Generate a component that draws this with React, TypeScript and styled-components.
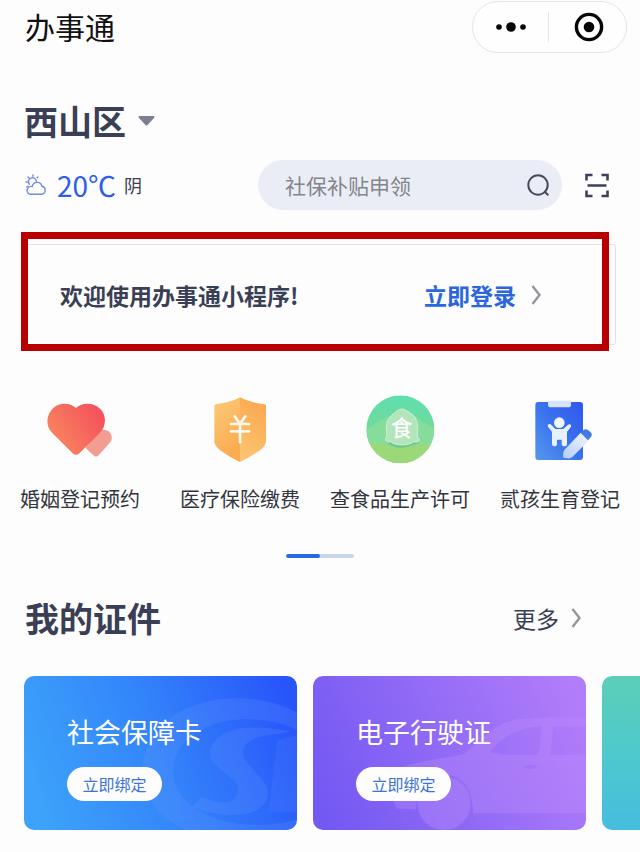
import React from "react";
import styled, { createGlobalStyle } from "styled-components";

const Global = createGlobalStyle`
  *, *::before, *::after { box-sizing: border-box; }
  body {
    margin: 0;
    background: #fdfdfd;
    color: #3a3f56;
    font-family: "Noto Sans CJK SC", sans-serif;
    overflow-x: hidden;
  }
  button, input { font: inherit; color: inherit; }
  button { border: 0; padding: 0; background: none; cursor: pointer; }
  h1, h2, h3, p, ul { margin: 0; padding: 0; }
  svg { display: block; flex: none; }
`;

const Page = styled.div`
  overflow: hidden;
  padding-bottom: 22px;
`;

const TitleBar = styled.header`
  display: flex;
  align-items: flex-start;
  justify-content: space-between;
  padding: 1px 13px 0 25px;
`;

const AppTitle = styled.h1`
  font-size: 30px;
  line-height: 50px;
  font-weight: 400;
  color: #111;
`;

const Capsule = styled.div`
  display: flex;
  align-items: center;
  width: 155px;
  height: 52px;
  border: 1px solid #e6e6ea;
  border-radius: 26px;
  background: #fefefe;
`;

const CapsuleButton = styled.button`
  display: flex;
  flex: 1;
  align-items: center;
  justify-content: center;
  height: 30px;
  & + & {
    padding-left: 2px;
    border-left: 1px solid #e6e6ea;
  }
`;

const Region = styled.button`
  display: flex;
  align-items: center;
  gap: 12px;
  margin: 43px 24px 0;
  font-size: 34px;
  line-height: 50px;
  font-weight: 700;
`;

const ToolRow = styled.div`
  display: flex;
  align-items: center;
  padding: 0 30px 0 25px;
  margin-top: 14px;
`;

const Weather = styled.div`
  display: flex;
  flex: 1;
  align-items: center;
  min-width: 0;
`;

const Temperature = styled.span`
  margin-left: 10px;
  font-size: 28px;
  line-height: 40px;
  color: #2b5cf0;
`;

const Sky = styled.span`
  margin-left: 8px;
  font-size: 18px;
  line-height: 40px;
`;

const SearchBox = styled.form`
  display: flex;
  align-items: center;
  flex: 0 1 304px;
  height: 50px;
  padding: 0 12px 0 27px;
  border-radius: 25px;
  background: #eaedf5;
`;

const SearchInput = styled.input`
  flex: 1;
  min-width: 0;
  padding: 0;
  border: 0;
  outline: 0;
  background: none;
  font-size: 21px;
  line-height: 32px;
  &::placeholder { color: #84858b; opacity: 1; }
`;

const ScanButton = styled.button`
  margin-left: 22px;
`;

const Notice = styled.section`
  position: relative;
  display: flex;
  align-items: center;
  justify-content: space-between;
  height: 101px;
  margin: 34px 24px 0;
  padding: 0 73px 0 35px;
  border: 1px solid #e3e3e5;
  border-radius: 3px;
  font-size: 23px;
  line-height: 34px;
  font-weight: 700;
  &::after {
    content: "";
    position: absolute;
    inset: -13px 6px -7px -4px;
    border: 7px solid #b90000;
    pointer-events: none;
  }
`;

const LoginLink = styled.a`
  display: flex;
  align-items: center;
  gap: 15px;
  color: #2a66dd;
  text-decoration: none;
`;

const Services = styled.nav`
  display: grid;
  grid-template-columns: repeat(4, 1fr);
  margin-top: 45px;
`;

const Service = styled.a`
  display: flex;
  flex-direction: column;
  align-items: center;
  gap: 14px;
  color: #33353d;
  font-size: 20px;
  line-height: 30px;
  text-decoration: none;
  white-space: nowrap;
`;

const Pager = styled.div`
  display: flex;
  width: 68px;
  height: 4px;
  margin: 40px auto 0;
  border-radius: 2px;
  background: #c9d6ea;
  overflow: hidden;
`;

const PagerThumb = styled.span`
  width: 50%;
  border-radius: 2px;
  background: #2a68e0;
`;

const SectionHead = styled.div`
  display: flex;
  align-items: center;
  justify-content: space-between;
  margin: 35px 58px 0 25px;
`;

const SectionTitle = styled.h2`
  font-size: 34px;
  line-height: 50px;
  font-weight: 700;
`;

const MoreLink = styled.a`
  display: flex;
  align-items: center;
  gap: 12px;
  color: #3a3f56;
  font-size: 23px;
  line-height: 34px;
  text-decoration: none;
`;

const CardStrip = styled.div`
  display: flex;
  gap: 16px;
  margin-top: 33px;
  padding-left: 24px;
`;

const Card = styled.article<{ $fill: string }>`
  position: relative;
  flex: 0 0 273px;
  height: 154px;
  padding: 36px 43px 0;
  border-radius: 10px;
  background: ${(p) => p.$fill};
  overflow: hidden;
`;

const CardArt = styled.svg`
  position: absolute;
  inset: 0;
  width: 100%;
  height: 100%;
`;

const CardTitle = styled.h3`
  position: relative;
  font-size: 27px;
  line-height: 40px;
  font-weight: 400;
  color: #fff;
`;

const BindButton = styled.button`
  position: relative;
  width: 95px;
  height: 34px;
  margin-top: 15px;
  border-radius: 17px;
  background: #fdfdfe;
  color: #3c74d6;
  font-size: 16px;
  line-height: 34px;
`;

const Chevron = () => (
  <svg width="11" height="22" viewBox="0 0 11 22" fill="none" stroke="#94969d" strokeWidth="2.4" aria-hidden="true">
    <path d="M1.5 2L8.5 11L1.5 20" />
  </svg>
);

const HeartIcon = () => (
  <svg width="80" height="80" viewBox="90 30 240 240" aria-hidden="true">
    <defs>
      <linearGradient id="heart" x1="0" y1="0.7" x2="0.9" y2="0.2">
        <stop offset="0" stopColor="#f98860" />
        <stop offset="1" stopColor="#f4545b" />
      </linearGradient>
    </defs>
    <path d="M250 166C262 148 286 144 298 156C308 167 308 180 298 190L266 226Q258 233 250 226L226 203Z" fill="#f39c90" />
    <path d="M198 84C180 68 150 66 130 84C108 104 106 138 126 158L188 220Q198 229 208 220L270 158C290 138 290 104 270 86C250 67 218 67 198 84Z" fill="url(#heart)" />
  </svg>
);

const ShieldIcon = () => (
  <svg width="80" height="80" viewBox="570 30 240 240" aria-hidden="true">
    <defs>
      <linearGradient id="shieldL" x1="0" y1="0" x2="0.4" y2="1">
        <stop offset="0" stopColor="#fccb78" />
        <stop offset="1" stopColor="#fbab50" />
      </linearGradient>
      <linearGradient id="shieldR" x1="0.5" y1="0" x2="0.2" y2="1">
        <stop offset="0" stopColor="#fba950" />
        <stop offset="1" stopColor="#fcc573" />
      </linearGradient>
    </defs>
    <path d="M690 52C668 64 640 70 617 73Q613 74 613 78V185C615 208 658 228 690 246Z" fill="url(#shieldL)" />
    <path d="M690 52C712 64 740 70 764 73Q768 74 768 78V185C766 208 722 228 690 246Z" fill="url(#shieldR)" />
    <path d="M674 109L690 132L706 109M663 132H717M663 154H717M690 132V187" fill="none" stroke="#fffaf0" strokeWidth="8" strokeLinecap="round" />
  </svg>
);

const FoodIcon = () => (
  <svg width="80" height="80" viewBox="120 30 240 240" aria-hidden="true">
    <defs>
      <linearGradient id="food" x1="0" y1="0" x2="0" y2="1">
        <stop offset="0" stopColor="#5fdfae" />
        <stop offset="1" stopColor="#82d58a" />
      </linearGradient>
      <clipPath id="foodClip"><circle cx="241" cy="148" r="102" /></clipPath>
    </defs>
    <g clipPath="url(#foodClip)">
      <rect x="139" y="46" width="204" height="204" fill="url(#food)" />
      <path d="M139 150C150 140 170 130 195 112L290 112C310 128 330 138 343 146V210H139Z" fill="#86dc9b" />
      <path d="M139 190C175 186 210 202 241 202S310 188 343 190V250H139Z" fill="#9bd878" />
    </g>
    <path d="M198 188L218 176H268L300 188L262 200Q241 207 222 200Z" fill="#66bd86" opacity="0.65" />
    <path d="M232 92Q246 82 260 92C272 100 282 105 286 114C295 130 294 154 292 170L299 180Q292 190 282 185C265 198 228 198 212 185Q200 190 196 178L201 168C197 146 198 124 209 112C215 104 225 98 232 92Z" fill="#b2e6ba" stroke="#cdf1d2" strokeWidth="3" />
    <text x="245" y="167" textAnchor="middle" fontSize="64" fontWeight="500" fill="#fff">食</text>
  </svg>
);

const ClipboardIcon = () => (
  <svg width="80" height="80" viewBox="600 30 240 240" aria-hidden="true">
    <defs>
      <linearGradient id="board" x1="1" y1="0.1" x2="0" y2="1">
        <stop offset="0" stopColor="#3159ed" />
        <stop offset="0.5" stopColor="#3a74ee" />
        <stop offset="1" stopColor="#5598ed" />
      </linearGradient>
      <linearGradient id="pencil" x1="1" y1="0" x2="0" y2="1">
        <stop offset="0" stopColor="#f2f6ff" />
        <stop offset="1" stopColor="#b4cdf7" />
      </linearGradient>
    </defs>
    <rect x="646" y="66" width="143" height="174" rx="9" fill="url(#board)" />
    <path d="M684 62H753V75Q753 82 745 82H692Q684 82 684 75Z" fill="#d5e3fb" />
    <circle cx="718" cy="128" r="16" fill="#f0f5ff" />
    <path d="M684 134Q690 130 694 135L706 147H730L743 135Q748 130 753 135Q755 139 751 143L741 155V192Q741 199 733 199Q725 199 725 192V179H711V192Q711 199 703 199Q696 199 696 192V155L685 142Q681 138 684 134Z" fill="#e8f0ff" />
    <path d="M782 158L808 180L757 231Q751 236 743 235L733 234Q729 233 729 229L730 217Q731 212 735 208Z" fill="url(#pencil)" />
    <path d="M782 158L791 150Q797 145 804 150L812 157Q819 164 812 172L804 181Z" fill="#4379e6" />
  </svg>
);

const WeatherIcon = () => (
  <svg width="22" height="22" viewBox="0 0 22 22" fill="none" stroke="#718be0" strokeWidth="1.4" strokeLinecap="round" aria-hidden="true">
    <path d="M5 20.2H16.5A4 4 0 0 0 17 12.3A5 5 0 0 0 7.2 12.5A4 4 0 0 0 5 20.2Z" />
    <path d="M4.3 10.2A4 4 0 1 1 11.4 7.2M8 1V2.2M3 3L4 4M13 3L12.2 3.8M1 8H2.2M1.8 13L2.8 12.2" />
  </svg>
);

const services = [
  { label: "婚姻登记预约", Icon: HeartIcon },
  { label: "医疗保险缴费", Icon: ShieldIcon },
  { label: "查食品生产许可", Icon: FoodIcon },
  { label: "贰孩生育登记", Icon: ClipboardIcon },
];

export default function App() {
  return (
    <Page>
      <Global />
      <TitleBar>
        <AppTitle>办事通</AppTitle>
        <Capsule>
          <CapsuleButton type="button" aria-label="更多操作">
            <svg width="30" height="10" viewBox="0 0 30 10" fill="#050505" aria-hidden="true">
              <circle cx="3" cy="5" r="2.8" />
              <circle cx="15" cy="5" r="4.8" />
              <circle cx="27" cy="5" r="2.8" />
            </svg>
          </CapsuleButton>
          <CapsuleButton type="button" aria-label="关闭">
            <svg width="30" height="30" viewBox="0 0 30 30" aria-hidden="true">
              <circle cx="15" cy="15" r="12.6" fill="none" stroke="#050505" strokeWidth="3.4" />
              <circle cx="15" cy="15" r="5.3" fill="#050505" />
            </svg>
          </CapsuleButton>
        </Capsule>
      </TitleBar>

      <Region type="button">
        西山区
        <svg width="17" height="10" viewBox="0 0 17 10" aria-hidden="true">
          <path d="M1 0H16Q17 1 16 2L9.5 9Q8.5 10 7.5 9L1 2Q0 1 1 0Z" fill="#7d8090" />
        </svg>
      </Region>

      <ToolRow>
        <Weather>
          <WeatherIcon />
          <Temperature>20℃</Temperature>
          <Sky>阴</Sky>
        </Weather>
        <SearchBox role="search">
          <SearchInput type="text" aria-label="搜索" placeholder="社保补贴申领" />
          <svg width="24" height="24" viewBox="0 0 24 24" fill="none" stroke="#464a5c" strokeWidth="2" strokeLinecap="round" aria-hidden="true">
            <circle cx="12" cy="12" r="9.7" />
            <path d="M18.8 18.8L21.8 21.8" />
          </svg>
        </SearchBox>
        <ScanButton type="button" aria-label="扫一扫">
          <svg width="26" height="26" viewBox="0 0 26 26" fill="none" stroke="#3d4257" strokeWidth="2.6" aria-hidden="true">
            <path d="M2.5 8.5V3H8.5M17.5 3H23.5V8.5M23.5 18.5V24H17.5M8.5 24H2.5V18.5M3.5 13.5H22.5" />
          </svg>
        </ScanButton>
      </ToolRow>

      <Notice>
        <p>欢迎使用办事通小程序!</p>
        <LoginLink href="#login">立即登录<Chevron /></LoginLink>
      </Notice>

      <Services>
        {services.map(({ label, Icon }) => (
          <Service href="#service" key={label}>
            <Icon />
            {label}
          </Service>
        ))}
      </Services>
      <Pager><PagerThumb /></Pager>

      <SectionHead>
        <SectionTitle>我的证件</SectionTitle>
        <MoreLink href="#cards">更多<Chevron /></MoreLink>
      </SectionHead>

      <CardStrip>
        <Card $fill="linear-gradient(70deg, #3ca2fa 8%, #3384fa 50%, #2855fa 95%)">
          <CardArt viewBox="73 48 818 462" aria-hidden="true">
            <g fill="#6f9dff" fillOpacity="0.2">
              <path fillRule="evenodd" d="M428 318C440 190 570 115 710 115C790 115 850 135 891 158V510H555C470 465 420 400 428 318ZM520 325C515 420 620 495 775 495C820 495 860 488 891 478V210C840 185 790 178 730 178C610 182 525 245 520 325Z" />
              <path d="M870 213C800 203 735 196 695 212C655 225 628 252 630 285C636 325 702 345 714 382C718 418 690 430 655 426C635 424 622 418 604 412L576 440C620 460 680 470 735 462C800 450 820 405 792 365C768 332 726 306 729 272C734 242 780 224 835 222Z" />
              <path d="M832 240L891 226V455H806Z" fillOpacity="0.13" />
            </g>
          </CardArt>
          <CardTitle>社会保障卡</CardTitle>
          <BindButton type="button">立即绑定</BindButton>
        </Card>
        <Card $fill="linear-gradient(65deg, #7358f2 5%, #926bf6 50%, #b27dfa 95%)">
          <CardArt viewBox="-21 48 819 462" aria-hidden="true">
            <path fillRule="evenodd" d="M222 425L245 322C300 302 380 294 432 282C480 240 530 188 590 178C660 172 740 172 798 174V460H458C462 390 425 344 372 344C325 344 292 385 288 448L235 446Q224 442 222 425ZM510 275L550 284H655L667 198C600 202 550 225 510 275ZM700 200L691 284H798V198ZM610 320Q632 334 654 320Q632 308 610 320Z" fill="#c08ffb" fillOpacity="0.32" />
            <circle cx="372" cy="430" r="80" fill="#b98cfa" fillOpacity="0.4" />
          </CardArt>
          <CardTitle>电子行驶证</CardTitle>
          <BindButton type="button">立即绑定</BindButton>
        </Card>
        <Card $fill="linear-gradient(180deg, #5ccfb8 0%, #4ec9cc 50%, #45bddd 100%)" />
      </CardStrip>
    </Page>
  );
}
